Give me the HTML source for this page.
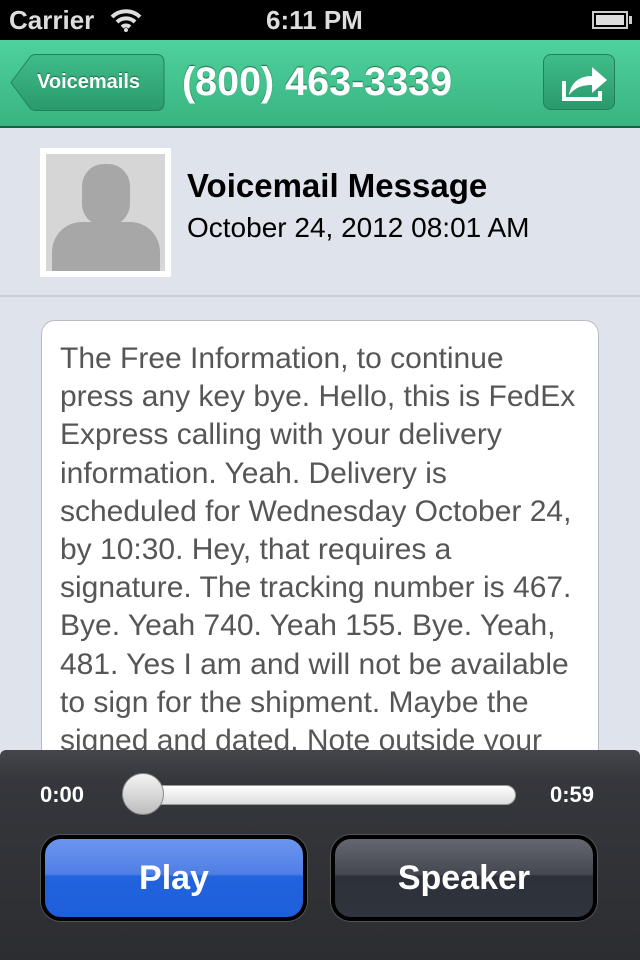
<!DOCTYPE html>
<html><head><style>
*{margin:0;padding:0;box-sizing:border-box}
body{width:640px;height:960px;overflow:hidden;background:#dfe4ec;font-family:"Liberation Sans",sans-serif;position:relative}
.sb{position:absolute;top:0;left:0;width:640px;height:40px;background:#000;color:#fff;font-size:26px;font-weight:bold}
.nav{position:absolute;top:40px;left:0;width:640px;height:88px;background:linear-gradient(#4fd19d,#38b47f);border-bottom:2px solid #1f5e44}
.back{position:absolute;left:10px;top:14px;width:155px;height:57px}
.back span{position:absolute;left:27px;top:0;line-height:56px;color:#fff;font-weight:bold;font-size:20px;text-shadow:0 -1px 1px #1d6b4a}
.title{position:absolute;left:182px;top:20px;color:#fff;font-size:39.5px;font-weight:bold;text-shadow:0 -1px 1px #1d6b4a}
.share{position:absolute;left:543px;top:14px;width:72px;height:56px;background:linear-gradient(#3fbd88,#2a9a6b);border:1px solid #23805a;border-radius:8px}
.av{position:absolute;left:40px;top:148px;width:131px;height:129px;background:#fff;padding:6px}
.av div{width:100%;height:100%;background:#d6d6d6;position:relative;overflow:hidden}
.h1{position:absolute;left:187px;top:167px;font-size:33px;font-weight:bold;color:#000;white-space:nowrap}
.h2{position:absolute;left:187px;top:212px;font-size:28px;color:#000;white-space:nowrap}
.sep{position:absolute;left:0;top:295px;width:640px;height:2px;background:#c9ced6}
.box{position:absolute;left:41px;top:320px;width:558px;height:500px;background:#fff;border:1px solid #b8bcc2;border-radius:14px;padding:19px 18px;font-size:30px;line-height:38.2px;color:#565656;white-space:nowrap;letter-spacing:0;overflow:hidden}
.tb{position:absolute;left:0;top:750px;width:640px;height:210px;background:linear-gradient(#45464b,#36373c 30px,#2c2d31);border-radius:6px 6px 0 0}
.tm{position:absolute;top:782px;color:#fff;font-weight:bold;font-size:22px}
.track{position:absolute;left:122px;top:785px;width:394px;height:20px;border-radius:10px;background:linear-gradient(#fff,#ddd);border:1px solid #999}
.knob{position:absolute;left:122px;top:773px;width:42px;height:42px;border-radius:50%;background:linear-gradient(#f4f4f4,#bdbdbd);border:1px solid #888}
.btn{position:absolute;top:835px;width:266px;height:86px;border:4px solid #000;border-radius:20px;color:#fff;font-weight:bold;font-size:34px;text-align:center;line-height:78px;box-shadow:0 0 0 1px #555}
</style></head><body>
<div class="sb"><span style="position:absolute;left:9px;top:5px;color:#ddd">Carrier</span>
<svg style="position:absolute;left:110px;top:8px" width="32" height="24" viewBox="0 0 32 24"><path d="M2 9a20 20 0 0 1 28 0M7 14a13 13 0 0 1 18 0M12 19a6 6 0 0 1 8 0" stroke="#ddd" stroke-width="4" fill="none"/><circle cx="16" cy="22" r="2" fill="#ddd"/></svg>
<span style="position:absolute;left:266px;top:5px;color:#ddd">6:11 PM</span>
<div style="position:absolute;left:592px;top:11px;width:36px;height:18px;border:2px solid #ccc;padding:2px"><div style="background:#ddd;width:100%;height:100%"></div></div>
<div style="position:absolute;left:629px;top:16px;width:3px;height:8px;background:#ccc"></div></div>
<div class="nav">
<div class="back"><svg width="155" height="57" viewBox="0 0 155 57"><defs><linearGradient id="g" x1="0" y1="0" x2="0" y2="1"><stop offset="0" stop-color="#3fbd88"/><stop offset="1" stop-color="#2a9a6b"/></linearGradient></defs><path d="M1 28.5L20 3Q22 0.5 26 0.5H146Q154 0.5 154 8.5V48.5Q154 56.5 146 56.5H26Q22 56.5 20 54Z" fill="url(#g)" stroke="#23805a"/></svg><span>Voicemails</span></div>
<div class="title">(800) 463-3339</div>
<div class="share"><svg width="72" height="56" viewBox="0 0 72 56"><path d="M20 26v18h36v-8" stroke="#fff" stroke-width="4" fill="none"/><path d="M25 40c2-13 11-19 23-19v-9l15 13-15 13v-8c-11 0-17 3-23 10z" fill="#fff"/></svg></div>
</div>
<div class="av"><div><div style="position:absolute;left:36px;top:10px;width:48px;height:62px;border-radius:22px;background:#a7a7a7"></div><div style="position:absolute;left:6px;top:68px;width:108px;height:60px;border-radius:30px 30px 0 0;background:#a7a7a7"></div></div></div>
<div class="h1">Voicemail Message</div>
<div class="h2">October 24, 2012 08:01 AM</div>
<div class="sep"></div>
<div class="box">The Free Information, to continue<br>press any key bye. Hello, this is FedEx<br>Express calling with your delivery<br>information. Yeah. Delivery is<br>scheduled for Wednesday October 24,<br>by 10:30. Hey, that requires a<br>signature. The tracking number is 467.<br>Bye. Yeah 740. Yeah 155. Bye. Yeah,<br>481. Yes I am and will not be available<br>to sign for the shipment. Maybe the<br>signed and dated. Note outside your</div>
<div class="tb"></div>
<div class="tm" style="left:40px">0:00</div>
<div class="tm" style="left:550px">0:59</div>
<div class="track"></div>
<div class="knob"></div>
<div class="btn" style="left:41px;background:linear-gradient(#6c95ee,#4f7fe6 45%,#2162dd 48%,#1f5fdc)">Play</div>
<div class="btn" style="left:331px;background:linear-gradient(#64676e,#454850 45%,#2c3038 48%,#30343c)">Speaker</div>
</body></html>
